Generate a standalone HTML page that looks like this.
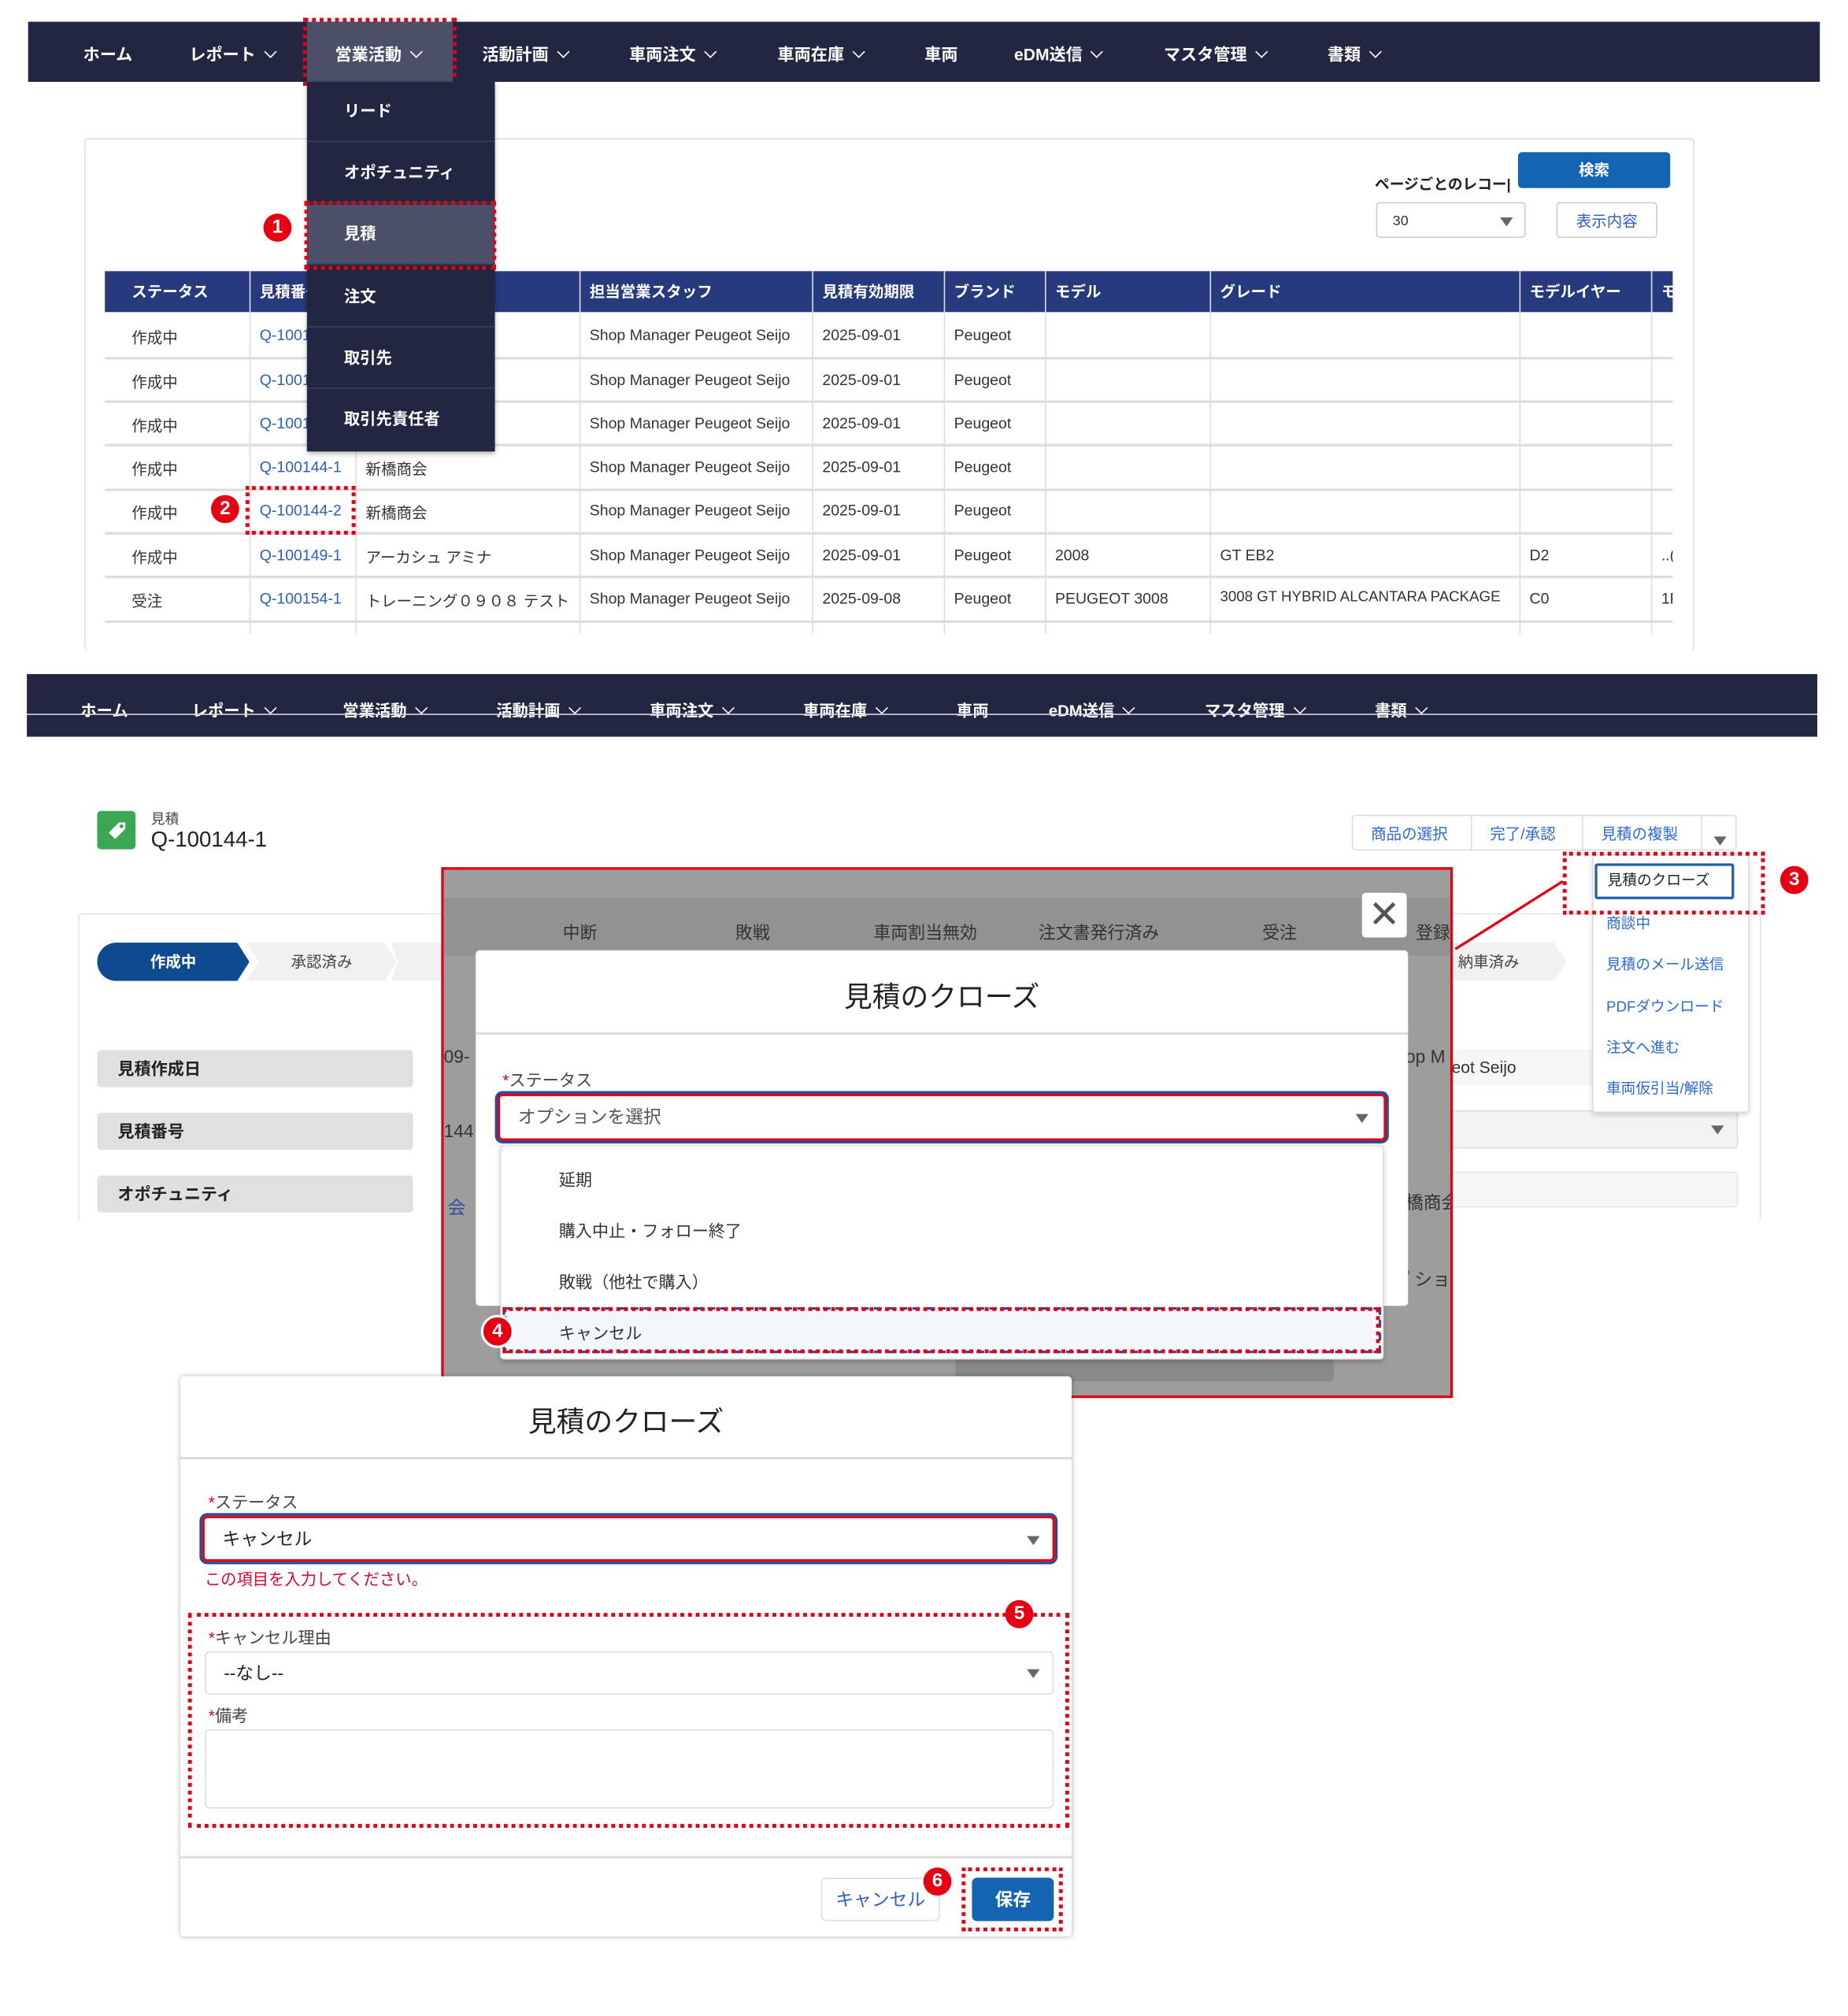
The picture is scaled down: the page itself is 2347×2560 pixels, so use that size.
<!DOCTYPE html>
<html><head><meta charset="utf-8">
<style>
html,body{margin:0;padding:0;background:#fff;}
body{width:2347px;height:2560px;overflow:hidden;position:relative;font-family:"Liberation Sans","Noto Sans CJK JP",sans-serif;}
#w{position:absolute;left:0;top:0;width:1445px;height:1576px;transform:scale(1.6242);transform-origin:0 0;}
.a{position:absolute;white-space:nowrap;}
.nav{background:#222641;}
.nv{position:absolute;color:#fff;font-weight:bold;font-size:13px;white-space:nowrap;}
.car{display:inline-block;width:6px;height:6px;border-right:1.6px solid #fff;border-bottom:1.6px solid #fff;transform:rotate(45deg);margin-left:8px;position:relative;top:-3px;}
.dot{border:3px dotted #e60012;}
.num{position:absolute;width:22px;height:22px;border-radius:50%;background:#e60012;color:#fff;font-weight:bold;font-size:15px;text-align:center;line-height:22px;}
.mi{position:absolute;left:0;width:147px;height:47px;border-bottom:1px solid #3b3f5a;color:#fff;font-size:12.5px;font-weight:bold;line-height:47px;padding-left:29px;box-sizing:border-box;}
.th{position:absolute;top:212px;height:32px;line-height:32px;color:#fff;font-weight:bold;font-size:12px;white-space:nowrap;overflow:hidden;}
.td{position:absolute;font-size:12px;color:#333;white-space:nowrap;}
.lnk{color:#2d5fc4;}
.vl{position:absolute;width:1px;background:#ddd;}
.hl{position:absolute;height:2px;background:#ddd;}
.lbl{position:absolute;left:76px;width:247px;height:29px;background:#e0e0e0;border-radius:3px;font-weight:bold;font-size:13px;line-height:29px;padding-left:16px;box-sizing:border-box;color:#222;}
.bl{color:#2a6ad6;font-size:11.5px;position:absolute;white-space:nowrap;}
.tri{display:inline-block;width:0;height:0;border-left:5px solid transparent;border-right:5px solid transparent;border-top:7px solid #666;}
</style></head><body><div id="w">

<!-- SECTION 1 -->
<div class="a nav" style="left:22px;top:17px;width:1401px;height:47px;"></div>
<div class="a" style="left:240px;top:17px;width:114px;height:47px;background:#4b4f67;"></div>
<div class="nv" style="left:65px;top:32px;">ホーム</div>
<div class="nv" style="left:148px;top:32px;">レポート<span class="car"></span></div>
<div class="nv" style="left:262px;top:32px;">営業活動<span class="car"></span></div>
<div class="nv" style="left:377px;top:32px;">活動計画<span class="car"></span></div>
<div class="nv" style="left:492px;top:32px;">車両注文<span class="car"></span></div>
<div class="nv" style="left:608px;top:32px;">車両在庫<span class="car"></span></div>
<div class="nv" style="left:723px;top:32px;">車両</div>
<div class="nv" style="left:793px;top:32px;">eDM送信<span class="car"></span></div>
<div class="nv" style="left:910px;top:32px;">マスタ管理<span class="car"></span></div>
<div class="nv" style="left:1038px;top:32px;">書類<span class="car"></span></div>
<div class="a dot" style="left:237px;top:14px;width:114px;height:47px;"></div>

<!-- panel -->
<div class="a" style="left:66px;top:108px;width:1257px;height:400px;border:1px solid #ddd;border-bottom:none;border-radius:3px;"></div>
<div class="a" style="left:1187px;top:119px;width:119px;height:28px;background:#1464b4;border-radius:3px;color:#fff;font-size:12px;font-weight:bold;text-align:center;line-height:28px;">検索</div>
<div class="a" style="left:1075px;top:136px;font-size:11.5px;font-weight:bold;color:#222;">ページごとのレコー|</div>
<div class="a" style="left:1076px;top:158px;width:117px;height:28px;border:1px solid #ccc;border-radius:3px;font-size:11px;line-height:28px;padding-left:12px;box-sizing:border-box;color:#333;">30<span class="tri" style="position:absolute;right:9px;top:11px;"></span></div>
<div class="a" style="left:1217px;top:158px;width:79px;height:28px;border:1px solid #ccc;border-radius:3px;font-size:12px;line-height:28px;text-align:center;color:#2d5fc4;box-sizing:border-box;">表示内容</div>

<!-- table -->
<div class="a" style="left:82px;top:212px;width:1226px;height:32px;background:#263a7d;"></div>
<div class="th" style="left:103px;">ステータス</div>
<div class="th" style="left:203px;">見積番号</div>
<div class="th" style="left:461px;">担当営業スタッフ</div>
<div class="th" style="left:643px;">見積有効期限</div>
<div class="th" style="left:746px;">ブランド</div>
<div class="th" style="left:825px;">モデル</div>
<div class="th" style="left:954px;">グレード</div>
<div class="th" style="left:1196px;">モデルイヤー</div>
<div class="th" style="left:1299px;width:9px;">モ</div>
<div class="vl" style="left:195px;top:212px;height:284px;"></div>
<div class="vl" style="left:278px;top:212px;height:284px;"></div>
<div class="vl" style="left:453px;top:212px;height:284px;"></div>
<div class="vl" style="left:635px;top:212px;height:284px;"></div>
<div class="vl" style="left:738px;top:212px;height:284px;"></div>
<div class="vl" style="left:817px;top:212px;height:284px;"></div>
<div class="vl" style="left:946px;top:212px;height:284px;"></div>
<div class="vl" style="left:1188px;top:212px;height:284px;"></div>
<div class="vl" style="left:1291px;top:212px;height:284px;"></div>
<div class="hl" style="left:82px;top:279px;width:1226px;"></div>
<div class="hl" style="left:82px;top:313px;width:1226px;"></div>
<div class="hl" style="left:82px;top:347px;width:1226px;"></div>
<div class="hl" style="left:82px;top:382px;width:1226px;"></div>
<div class="hl" style="left:82px;top:416px;width:1226px;"></div>
<div class="hl" style="left:82px;top:450px;width:1226px;"></div>
<div class="hl" style="left:82px;top:485px;width:1226px;"></div>

<div class="td" style="left:103px;top:255px;">作成中</div><div class="td lnk" style="left:203px;top:255px;">Q-100144</div><div class="td" style="left:461px;top:255px;">Shop Manager Peugeot Seijo</div><div class="td" style="left:643px;top:255px;">2025-09-01</div><div class="td" style="left:746px;top:255px;">Peugeot</div>
<div class="td" style="left:103px;top:290px;">作成中</div><div class="td lnk" style="left:203px;top:290px;">Q-100144</div><div class="td" style="left:461px;top:290px;">Shop Manager Peugeot Seijo</div><div class="td" style="left:643px;top:290px;">2025-09-01</div><div class="td" style="left:746px;top:290px;">Peugeot</div>
<div class="td" style="left:103px;top:324px;">作成中</div><div class="td lnk" style="left:203px;top:324px;">Q-100144</div><div class="td" style="left:461px;top:324px;">Shop Manager Peugeot Seijo</div><div class="td" style="left:643px;top:324px;">2025-09-01</div><div class="td" style="left:746px;top:324px;">Peugeot</div>
<div class="td" style="left:103px;top:358px;">作成中</div><div class="td lnk" style="left:203px;top:358px;">Q-100144-1</div><div class="td" style="left:286px;top:358px;">新橋商会</div><div class="td" style="left:461px;top:358px;">Shop Manager Peugeot Seijo</div><div class="td" style="left:643px;top:358px;">2025-09-01</div><div class="td" style="left:746px;top:358px;">Peugeot</div>
<div class="td" style="left:103px;top:392px;">作成中</div><div class="td lnk" style="left:203px;top:392px;">Q-100144-2</div><div class="td" style="left:286px;top:392px;">新橋商会</div><div class="td" style="left:461px;top:392px;">Shop Manager Peugeot Seijo</div><div class="td" style="left:643px;top:392px;">2025-09-01</div><div class="td" style="left:746px;top:392px;">Peugeot</div>
<div class="td" style="left:103px;top:427px;">作成中</div><div class="td lnk" style="left:203px;top:427px;">Q-100149-1</div><div class="td" style="left:286px;top:427px;">アーカシュ アミナ</div><div class="td" style="left:461px;top:427px;">Shop Manager Peugeot Seijo</div><div class="td" style="left:643px;top:427px;">2025-09-01</div><div class="td" style="left:746px;top:427px;">Peugeot</div><div class="td" style="left:825px;top:427px;">2008</div><div class="td" style="left:954px;top:427px;">GT EB2</div><div class="td" style="left:1196px;top:427px;">D2</div><div class="td" style="left:1299px;top:427px;">..(</div>
<div class="td" style="left:103px;top:461px;">受注</div><div class="td lnk" style="left:203px;top:461px;">Q-100154-1</div><div class="td" style="left:286px;top:461px;">トレーニング０９０８ テスト</div><div class="td" style="left:461px;top:461px;">Shop Manager Peugeot Seijo</div><div class="td" style="left:643px;top:461px;">2025-09-08</div><div class="td" style="left:746px;top:461px;">Peugeot</div><div class="td" style="left:825px;top:461px;">PEUGEOT 3008</div><div class="td" style="left:954px;top:461px;font-size:11.5px;">3008 GT HYBRID ALCANTARA PACKAGE</div><div class="td" style="left:1196px;top:461px;">C0</div><div class="td" style="left:1299px;top:461px;">1F</div>
<div class="a" style="left:1308px;top:212px;width:15px;height:285px;background:#fff;"></div>

<div class="a dot" style="left:192px;top:380px;width:80px;height:32px;"></div>
<div class="num" style="left:165px;top:387px;">2</div>

<!-- dropdown menu -->
<div class="a" style="left:240px;top:64px;width:147px;height:289px;background:#222641;box-shadow:0 2px 4px rgba(0,0,0,.3);">
<div class="mi" style="top:0;">リード</div>
<div class="mi" style="top:48px;">オポチュニティ</div>
<div class="mi" style="top:96px;background:#4b4f67;">見積</div>
<div class="mi" style="top:145px;">注文</div>
<div class="mi" style="top:193px;">取引先</div>
<div class="mi" style="top:241px;border:none;">取引先責任者</div>
</div>
<div class="a dot" style="left:238px;top:157px;width:144px;height:48px;"></div>
<div class="num" style="left:206px;top:167px;">1</div>

<!-- SECTION 2 -->
<div class="a nav" style="left:21px;top:527px;width:1400px;height:49px;"></div>
<div class="nv" style="left:63px;top:545px;font-size:12.5px;">ホーム</div>
<div class="nv" style="left:150px;top:545px;font-size:12.5px;">レポート<span class="car"></span></div>
<div class="nv" style="left:268px;top:545px;font-size:12.5px;">営業活動<span class="car"></span></div>
<div class="nv" style="left:388px;top:545px;font-size:12.5px;">活動計画<span class="car"></span></div>
<div class="nv" style="left:508px;top:545px;font-size:12.5px;">車両注文<span class="car"></span></div>
<div class="nv" style="left:628px;top:545px;font-size:12.5px;">車両在庫<span class="car"></span></div>
<div class="nv" style="left:748px;top:545px;font-size:12.5px;">車両</div>
<div class="nv" style="left:820px;top:545px;font-size:12.5px;">eDM送信<span class="car"></span></div>
<div class="nv" style="left:942px;top:545px;font-size:12.5px;">マスタ管理<span class="car"></span></div>
<div class="nv" style="left:1075px;top:545px;font-size:12.5px;">書類<span class="car"></span></div>
<div class="a" style="left:21px;top:558px;width:1400px;height:1px;background:#cfd2de;"></div>

<div class="a" style="left:76px;top:634px;width:30px;height:30px;background:#3ba755;border-radius:3px;">
<svg width="30" height="30" viewBox="0 0 30 30"><path d="M9 17 L17 9 L22 9 L22 14 L14 22 Z" fill="#fff"/><circle cx="19" cy="12" r="1.5" fill="#3ba755"/></svg></div>
<div class="a" style="left:118px;top:632px;font-size:11px;color:#444;">見積</div>
<div class="a" style="left:118px;top:647px;font-size:17px;color:#222;">Q-100144-1</div>

<div class="a" style="left:1057px;top:637px;width:301px;height:28px;border:1px solid #ddd;border-radius:3px;box-sizing:border-box;"></div>
<div class="a" style="left:1150px;top:637px;width:1px;height:28px;background:#ddd;"></div>
<div class="a" style="left:1237px;top:637px;width:1px;height:28px;background:#ddd;"></div>
<div class="a" style="left:1330px;top:637px;width:1px;height:28px;background:#ddd;"></div>
<div class="bl" style="left:1072px;top:643px;font-size:12px;">商品の選択</div>
<div class="bl" style="left:1165px;top:643px;font-size:12px;">完了/承認</div>
<div class="bl" style="left:1252px;top:643px;font-size:12px;">見積の複製</div>
<div class="a" style="left:1340px;top:648px;"><span class="tri"></span></div>

<div class="a" style="left:61px;top:714px;width:1314px;height:240px;border:1px solid #e2e2e2;border-bottom:none;border-radius:3px;"></div>
<div class="a" style="left:76px;top:737px;width:119px;height:30px;background:#0d4a8f;border-radius:15px 0 0 15px;clip-path:polygon(0 0,92% 0,100% 50%,92% 100%,0 100%);color:#fff;font-weight:bold;font-size:12px;line-height:30px;text-align:center;">作成中</div>
<div class="a" style="left:193px;top:737px;width:117px;height:30px;background:#f1f1f1;clip-path:polygon(0 0,92% 0,100% 50%,92% 100%,0 100%,8% 50%);font-size:12px;line-height:30px;text-align:center;color:#444;">承認済み</div>
<div class="a" style="left:306px;top:737px;width:60px;height:30px;background:#f1f1f1;clip-path:polygon(0 0,100% 0,100% 100%,0 100%,8% 50%);"></div>
<div class="a" style="left:1125px;top:737px;width:100px;height:30px;background:#f1f1f1;clip-path:polygon(0 0,90% 0,100% 50%,90% 100%,0 100%,8% 50%);font-size:12px;line-height:30px;color:#444;padding-left:15px;box-sizing:border-box;">納車済み</div>
<div class="lbl" style="top:821px;">見積作成日</div>
<div class="lbl" style="top:870px;">見積番号</div>
<div class="lbl" style="top:919px;">オポチュニティ</div>
<div class="a" style="left:1135px;top:820px;width:110px;height:29px;background:#f6f6f6;border-radius:3px;font-size:13px;line-height:29px;color:#333;">eot Seijo</div>
<div class="a" style="left:1135px;top:868px;width:224px;height:30px;background:#f3f3f3;border:1px solid #ddd;border-radius:3px;box-sizing:border-box;"><span class="tri" style="position:absolute;right:10px;top:11px;"></span></div>
<div class="a" style="left:1135px;top:916px;width:224px;height:28px;background:#f6f6f6;border:1px solid #e6e6e6;border-radius:3px;box-sizing:border-box;"></div>

<!-- action menu -->
<div class="a" style="left:1245px;top:668px;width:123px;height:202px;background:#fff;border:1px solid #ddd;border-radius:3px;box-shadow:0 2px 4px rgba(0,0,0,.15);box-sizing:border-box;"></div>
<div class="a" style="left:1247px;top:675px;width:109px;height:28px;border:2px solid #1f5fa8;border-radius:2px;box-sizing:border-box;font-size:11.5px;line-height:24px;padding-left:8px;color:#222;">見積のクローズ</div>
<div class="bl" style="left:1256px;top:714px;">商談中</div>
<div class="bl" style="left:1256px;top:746px;">見積のメール送信</div>
<div class="bl" style="left:1256px;top:779px;">PDFダウンロード</div>
<div class="bl" style="left:1256px;top:811px;">注文へ進む</div>
<div class="bl" style="left:1256px;top:843px;">車両仮引当/解除</div>
<div class="a dot" style="left:1222px;top:666px;width:152px;height:43px;"></div>
<div class="num" style="left:1392px;top:677px;">3</div>
<svg class="a" style="left:1130px;top:680px;" width="100" height="70"><line x1="92" y1="9" x2="8" y2="62" stroke="#e60012" stroke-width="2"/></svg>

<!-- overlay -->
<div class="a" style="left:345px;top:678px;width:791px;height:415px;background:#9d9d9d;border:2px solid #e60012;box-sizing:border-box;overflow:hidden;">
 <div class="a" style="left:0;top:22px;width:791px;height:45px;background:#929292;"></div>
 <div class="a" style="left:93px;top:38px;font-size:13.5px;color:#333;">中断</div>
 <div class="a" style="left:228px;top:38px;font-size:13.5px;color:#333;">敗戦</div>
 <div class="a" style="left:336px;top:38px;font-size:13.5px;color:#333;">車両割当無効</div>
 <div class="a" style="left:465px;top:38px;font-size:13.5px;color:#333;">注文書発行済み</div>
 <div class="a" style="left:640px;top:38px;font-size:13.5px;color:#333;">受注</div>
 <div class="a" style="left:760px;top:38px;font-size:13.5px;color:#333;">登録</div>
 <div class="a" style="left:0;top:138px;font-size:14px;color:#333;">09-</div>
 <div class="a" style="left:0;top:196px;font-size:14px;color:#333;">144</div>
 <div class="a" style="left:3px;top:254px;font-size:14px;color:#2d4f9a;">会</div>
 <div class="a" style="left:752px;top:138px;font-size:14px;color:#333;">op M</div>
 <div class="a" style="left:752px;top:250px;font-size:14px;color:#333;">橋商会</div>
 <div class="a" style="left:752px;top:310px;font-size:14px;color:#333;">ﾟショ</div>
 <div class="a" style="left:400px;top:368px;width:296px;height:32px;background:#8a8a8a;border-radius:3px;"></div>
</div>
<div class="a" style="left:1065px;top:698px;width:35px;height:35px;background:#fff;border-radius:3px;font-size:30px;line-height:35px;text-align:center;color:#555;">✕</div>
<div class="a" style="left:372px;top:743px;width:729px;height:278px;background:#fff;border-radius:3px;"></div>
<div class="a" style="left:372px;top:762px;width:729px;text-align:center;font-size:22px;color:#222;">見積のクローズ</div>
<div class="a" style="left:372px;top:807px;width:729px;height:2px;background:#ddd;"></div>
<div class="a" style="left:393px;top:834px;font-size:13px;color:#444;"><span style="color:#e60012;">*</span>ステータス</div>
<div class="a" style="left:389px;top:855px;width:695px;height:37px;border:2px solid #e60012;box-shadow:0 0 0 2px #1f4fa0;border-radius:4px;box-sizing:border-box;background:#fff;font-size:14px;line-height:33px;padding-left:14px;color:#555;">オプションを選択<span class="tri" style="position:absolute;right:12px;top:14px;"></span></div>
<div class="a" style="left:391px;top:895px;width:691px;height:168px;background:#fff;border:1px solid #ddd;border-radius:3px;box-shadow:0 2px 4px rgba(0,0,0,.2);box-sizing:border-box;"></div>
<div class="a" style="left:437px;top:912px;font-size:13px;color:#333;">延期</div>
<div class="a" style="left:437px;top:952px;font-size:13px;color:#333;">購入中止・フォロー終了</div>
<div class="a" style="left:437px;top:992px;font-size:13px;color:#333;">敗戦（他社で購入）</div>
<div class="a" style="left:395px;top:1024px;width:683px;height:32px;background:#f3f6fa;outline:2px dashed #1f4fa0;"></div>
<div class="a dot" style="left:393px;top:1022px;width:680px;height:30px;"></div>
<div class="a" style="left:437px;top:1032px;font-size:13px;color:#333;">キャンセル</div>
<div class="num" style="left:376px;top:1028px;border:2px solid #fff;">4</div>

<!-- SECTION 3 modal -->
<div class="a" style="left:141px;top:1076px;width:697px;height:438px;background:#fff;box-shadow:0 0 4px rgba(0,0,0,.3);border-radius:3px;"></div>
<div class="a" style="left:141px;top:1094px;width:697px;text-align:center;font-size:22px;color:#222;">見積のクローズ</div>
<div class="a" style="left:141px;top:1139px;width:697px;height:2px;background:#ddd;"></div>
<div class="a" style="left:163px;top:1164px;font-size:13px;color:#444;"><span style="color:#e60012;">*</span>ステータス</div>
<div class="a" style="left:158px;top:1185px;width:667px;height:36px;border:2px solid #e60012;box-shadow:0 0 0 2px #1f4fa0;border-radius:4px;box-sizing:border-box;font-size:14px;line-height:32px;padding-left:14px;color:#222;">キャンセル<span class="tri" style="position:absolute;right:10px;top:14px;"></span></div>
<div class="a" style="left:160px;top:1224px;font-size:12.5px;color:#e60033;">この項目を入力してください。</div>
<div class="a dot" style="left:147px;top:1261px;width:683px;height:162px;"></div>
<div class="num" style="left:786px;top:1251px;">5</div>
<div class="a" style="left:163px;top:1270px;font-size:13px;color:#444;"><span style="color:#e60012;">*</span>キャンセル理由</div>
<div class="a" style="left:160px;top:1291px;width:664px;height:34px;border:1px solid #ddd;border-radius:4px;box-sizing:border-box;font-size:14px;line-height:32px;padding-left:14px;color:#222;">--なし--<span class="tri" style="position:absolute;right:10px;top:13px;"></span></div>
<div class="a" style="left:163px;top:1331px;font-size:13px;color:#444;"><span style="color:#e60012;">*</span>備考</div>
<div class="a" style="left:160px;top:1352px;width:664px;height:62px;border:1px solid #ddd;border-radius:4px;box-sizing:border-box;"></div>
<div class="a" style="left:141px;top:1451px;width:697px;height:2px;background:#ddd;"></div>
<div class="a" style="left:642px;top:1468px;width:93px;height:34px;border:1px solid #ddd;border-radius:4px;box-sizing:border-box;font-size:14px;line-height:32px;text-align:center;color:#2d5fc4;">キャンセル</div>
<div class="a" style="left:760px;top:1468px;width:64px;height:34px;background:#1464b4;border-radius:4px;font-size:14px;line-height:34px;text-align:center;color:#fff;font-weight:bold;">保存</div>
<div class="a dot" style="left:752px;top:1460px;width:73px;height:44px;"></div>
<div class="num" style="left:722px;top:1460px;">6</div>

</div></body></html>
